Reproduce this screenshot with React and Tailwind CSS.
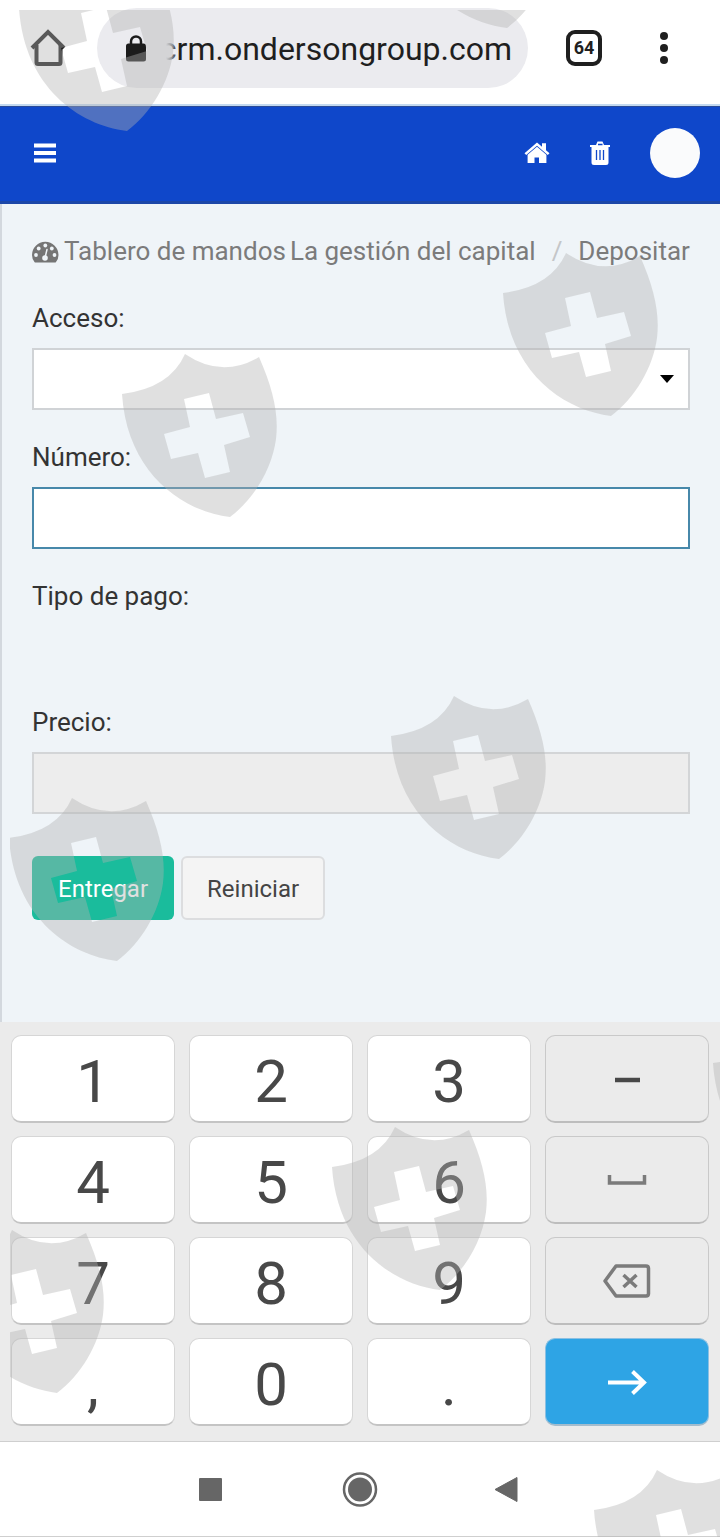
import { useState } from "react";

const keys = [
  "1", "2", "3", "minus",
  "4", "5", "6", "space",
  "7", "8", "9", "delete",
  ",", "0", ".", "go",
];

const shields = [
  [18, -32],
  [398, -135],
  [121, 354],
  [502, 253],
  [390, 696],
  [8, 798],
  [331, 1127],
  [-52, 1230],
  [712, 1023],
  [593, 1470],
];

const keyIcons = {
  minus: (
    <svg width="40" height="40" viewBox="0 0 40 40">
      <path d="M8 21H33" stroke="#484848" strokeWidth="4.500" />
    </svg>
  ),
  space: (
    <svg width="40" height="40" viewBox="0 0 40 40" fill="none">
      <path d="M2.500 15V23H37.500V15" stroke="#7b7b7b" strokeWidth="3.500" />
    </svg>
  ),
  delete: (
    <svg width="48" height="36" viewBox="0 0 48 36" fill="none" stroke="#7b7b7b">
      <path d="M13 3H43Q45.500 3 45.500 5.500V30.500Q45.500 33 43 33H13L2 18Z" strokeWidth="3.500" strokeLinejoin="round" />
      <path d="M20.500 12L33.500 24M33.500 12L20.500 24" strokeWidth="3.500" />
    </svg>
  ),
  go: (
    <svg width="40" height="40" viewBox="0 0 40 40" fill="none" stroke="#fff">
      <path d="M1 20.500H37M25.500 9.500L37 20.500L25.500 31.500" strokeWidth="4" />
    </svg>
  ),
};

const keyLabels = {
  minus: "Menos",
  space: "Espacio",
  delete: "Borrar",
  go: "Ir",
};

function BrowserBar() {
  return (
    <div className="flex items-center border-b-2 border-[#c3d9f0] bg-white pt-2 pr-[34px] pb-4 pl-[30px]">
      <button aria-label="Inicio" className="mr-[31px] shrink-0">
        <svg width="36" height="38" viewBox="0 0 36 38" fill="none" stroke="#1f1f1f" strokeWidth="4">
          <path d="M2 19L18 3L34 19" />
          <path d="M6.500 16V33.500Q6.500 35 8 35H29Q30.500 35 30.500 33.500V16" />
        </svg>
      </button>
      <div className="flex h-20 min-w-0 flex-1 items-center rounded-full bg-[#ebebef] pr-4 pl-[29px]">
        <svg className="shrink-0" width="20" height="27" viewBox="0 0 20 27">
          <path d="M5 10V6.500A5 5 0 0 1 15 6.500V10" fill="none" stroke="#1b1b1b" strokeWidth="2.500" />
          <rect y="8.500" width="20" height="18" rx="2.500" fill="#1b1b1b" />
        </svg>
        <div className="relative ml-5 flex min-w-0 flex-1 justify-end overflow-hidden">
          <input
            type="text"
            aria-label="Dirección"
            defaultValue="crm.ondersongroup.com"
            className="w-[380px] shrink-0 bg-transparent pt-[2px] text-right text-[32px] leading-10 text-[#1f1f1f] outline-none"
          />
          <div className="absolute inset-y-0 left-0 w-3 bg-linear-to-r from-[#ebebef] to-transparent"></div>
        </div>
      </div>
      <button className="ml-[38px] flex size-9 shrink-0 items-center justify-center rounded-[9px] border-4 border-[#1f1f1f] text-[18px] leading-none font-bold text-[#1f1f1f]">
        64
      </button>
      <button aria-label="Menú del navegador" className="ml-10 shrink-0">
        <svg width="44" height="36" viewBox="0 0 44 36" fill="#1f1f1f">
          <circle cx="22" cy="6" r="4" />
          <circle cx="22" cy="18" r="4" />
          <circle cx="22" cy="30" r="4" />
        </svg>
      </button>
    </div>
  );
}

function Header() {
  return (
    <header className="flex items-center justify-between border-t border-b-[3px] border-t-[#2a4a98] border-b-[#1c47a8] bg-[#0f47ca] pt-[21px] pr-5 pb-[23px] pl-[33px]">
      <button aria-label="Menú">
        <svg width="24" height="20" viewBox="0 0 24 20" fill="#fff">
          <path d="M1 0.500H23V4.500H1ZM1 8H23V12H1ZM1 15.500H23V19.500H1Z" />
        </svg>
      </button>
      <nav className="flex items-center gap-10">
        <a href="#inicio" aria-label="Inicio">
          <svg width="26" height="22" viewBox="0 0 26 22" fill="#fff">
            <path d="M13 0.500L0.500 11.200L2.200 13L13 3.800L23.800 13L25.500 11.200L22 8.200V1.200H18V4.800Z" />
            <path d="M13 4.800L3.600 12.800V21H10.500V15.500H15V21H22.400V12.800Z" />
          </svg>
        </a>
        <a href="#papelera" aria-label="Papelera">
          <svg width="20" height="24" viewBox="0 0 20 24">
            <path d="M0 4H6L7.500 0.500H12.500L14 4H20V6H18.500V21.500Q18.500 24 16 24H4Q1.500 24 1.500 21.500V6H0Z" fill="#fff" />
            <path d="M8 3.500H12.500M6.500 9V19M10 9V19M13.500 9V19" stroke="#0f47ca" strokeWidth="1.300" />
          </svg>
        </a>
        <button aria-label="Perfil" className="size-[50px] rounded-full bg-[#fafbfc]"></button>
      </nav>
    </header>
  );
}

function Breadcrumb() {
  return (
    <nav className="flex items-center whitespace-nowrap text-[#7b7b7b]">
      <a href="#tablero" className="mr-1 flex items-center">
        <svg className="mr-[5px]" width="27" height="22" viewBox="0 0 27 22">
          <path d="M2.500 21Q0 18 0 14A13.200 13.200 0 0 1 26.500 14Q26.500 18 24 21Q23.600 21.500 23 21.500H3.500Q2.900 21.500 2.500 21Z" fill="#757575" />
          <g fill="#eff4f8">
            <circle cx="4" cy="14" r="1.900" />
            <circle cx="6.700" cy="7.500" r="1.900" />
            <circle cx="13.300" cy="4.500" r="1.900" />
            <circle cx="19.800" cy="7.500" r="1.900" />
            <circle cx="22.500" cy="14" r="1.900" />
            <circle cx="13" cy="17" r="2.800" />
          </g>
          <path d="M13.200 16L15 8.500" stroke="#eff4f8" strokeWidth="1.500" strokeLinecap="round" />
        </svg>
        Tablero de mandos
      </a>
      <a href="#capital">La gestión del capital</a>
      <span className="px-4 text-[#c4c6c8]">/</span>
      <a href="#depositar">Depositar</a>
    </nav>
  );
}

function DepositForm() {
  const [amount, setAmount] = useState("");

  return (
    <form className="mt-7" onSubmit={(e) => e.preventDefault()} onReset={() => setAmount("")}>
      <div className="mb-7">
        <label htmlFor="login" className="mb-[10px] block">Acceso:</label>
        <div className="relative">
          <select id="login" className="block h-[62px] w-full appearance-none border-2 border-[#d0d3d6] bg-white px-4 outline-none"></select>
          <svg className="pointer-events-none absolute inset-y-0 right-[15px] my-auto" width="16" height="10" viewBox="0 0 16 10">
            <path d="M1 1H15L8 9Z" fill="#000" />
          </svg>
        </div>
      </div>
      <div className="mb-7">
        <label htmlFor="amount" className="mb-[10px] block">Número:</label>
        <input
          id="amount"
          type="text"
          inputMode="decimal"
          value={amount}
          onChange={(e) => setAmount(e.target.value)}
          className="block h-[62px] w-full border-2 border-[#4788aa] bg-white px-4 outline-none"
        />
      </div>
      <div className="mb-7">
        <p className="mb-[10px]">Tipo de pago:</p>
        <div className="h-[49px]"></div>
      </div>
      <div className="mb-[42px]">
        <label htmlFor="price" className="mb-[10px] block">Precio:</label>
        <input id="price" type="text" disabled className="block h-[62px] w-full border-2 border-[#d3d5d7] bg-[#ededed] px-4" />
      </div>
      <div className="flex gap-[7px] text-[24px]">
        <button type="submit" className="h-16 rounded-md bg-[#1abc9c] px-[26px] pt-[2px] text-white">Entregar</button>
        <button type="reset" className="h-16 rounded-md border-2 border-[#dcdddf] bg-[#f4f4f4] px-6 pt-[2px] text-[#444]">Reiniciar</button>
      </div>
    </form>
  );
}

function Keypad() {
  return (
    <div className="grid grid-cols-4 gap-x-[14px] gap-y-[13px] bg-[#ebebeb] px-[11px] pt-[13px] pb-[15px]">
      {keys.map((key) => {
        const color =
          key === "go"
            ? "border-[#8cc0e2] border-b-[#a3bccd] bg-[#2ea4e5]"
            : keyIcons[key]
              ? "border-[#c9c9c9] border-b-[#bdbdbd] bg-[#ebebeb]"
              : "border-[#d6d6d6] border-b-[#c4c4c4] bg-white pt-[6px]";
        return (
          <button
            key={key}
            aria-label={keyLabels[key]}
            className={`flex h-[88px] items-center justify-center rounded-[10px] border border-b-2 text-[60px] leading-none text-[#484848] ${color}`}
          >
            {keyIcons[key] || key}
          </button>
        );
      })}
    </div>
  );
}

function SystemNav() {
  return (
    <div className="flex h-24 items-center justify-center gap-28 border-y border-[#cfcfcf] bg-white">
      <button aria-label="Recientes">
        <svg width="36" height="36" viewBox="0 0 36 36">
          <rect x="5" y="7" width="23" height="23" rx="1" fill="#666" />
        </svg>
      </button>
      <button aria-label="Pantalla de inicio">
        <svg width="36" height="36" viewBox="0 0 36 36">
          <circle cx="18" cy="18.500" r="16" fill="none" stroke="#666" strokeWidth="2.500" />
          <circle cx="18" cy="18.500" r="12" fill="#666" />
        </svg>
      </button>
      <button aria-label="Atrás">
        <svg width="36" height="36" viewBox="0 0 36 36">
          <path d="M27 6.500V30.500L5 18.500Z" fill="#666" stroke="#666" strokeLinejoin="round" />
        </svg>
      </button>
    </div>
  );
}

// shield marks repeated over the whole screen
function Watermark() {
  return (
    <div className="pointer-events-none absolute top-[10px] right-0 bottom-0 left-[10px] overflow-hidden">
      <svg className="size-full" fill="#b2b2b2" fillOpacity="0.4" fillRule="evenodd" aria-hidden="true">
        {shields.map(([x, y]) => (
          <path
            key={`${x},${y}`}
            transform={`translate(${x - 10} ${y - 10})`}
            d="M1 40Q49 34 64 0Q101 25 138 3C152 35 158 60 155 85C151 115 133 145 109 163C60 157 6 118 1 40ZM63 45L88 39L95 65L122 59L129 83L103 91L109 118L84 124L77 99L50 105L43 80L69 73Z"
          />
        ))}
      </svg>
    </div>
  );
}

function App() {
  return (
    <div className="relative flex min-h-screen flex-col overflow-hidden bg-white font-[Roboto,sans-serif]">
      <BrowserBar />
      <Header />
      <main className="flex-1 border-l-2 border-[#d3d8de] bg-[#eff4f8] pt-7 pr-[30px] pb-10 pl-[30px] text-[26px] leading-[39px] text-[#333]">
        <Breadcrumb />
        <DepositForm />
      </main>
      <Keypad />
      <SystemNav />
      <Watermark />
    </div>
  );
}

export default App;
